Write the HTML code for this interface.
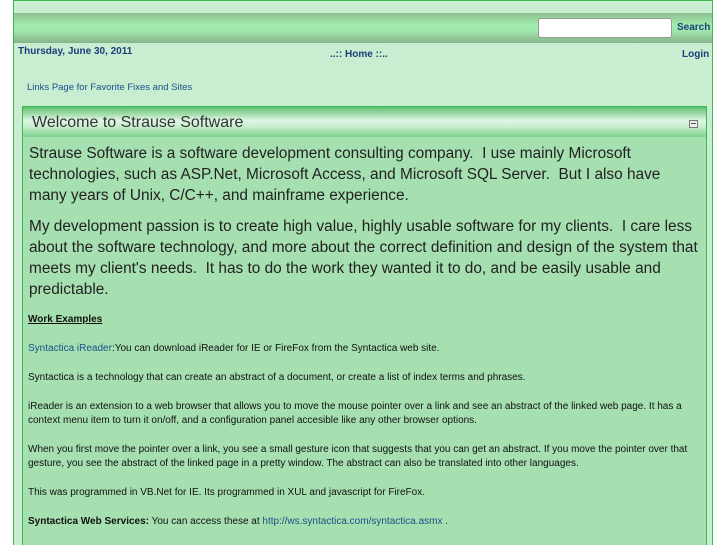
<!DOCTYPE html>
<html style="overflow:hidden;height:545px"><head><style>
body{margin:0;background:#fff;font-family:"Liberation Sans",sans-serif;width:727px;height:545px;overflow:hidden;position:relative}
#wrap{position:absolute;left:13px;top:0;width:698px;height:560px;border:1px solid #3cb850;background:#c8edd0;overflow:hidden}
#bar{position:absolute;left:0;top:12px;width:698px;height:30px;background:linear-gradient(#8fbf93,#a2eeae 40%,#9fe6aa 60%,#86b38a)}
#search{position:absolute;left:524px;top:5px;width:132px;height:18px;background:#fff;border:1px solid #999;border-radius:3px}
.nav{position:absolute;font-size:10px;font-weight:bold;color:#1a3f7a}
#panel{position:absolute;left:8px;top:105px;width:683px;height:460px;border:1px solid #3cb850;background:#a6dfb0}
#ph{height:30px;background:linear-gradient(#5fc071,#e0f6e4 45%,#c9efcf 65%,#7fd08e);font-size:16px;color:#333;line-height:32px;padding-left:9px;position:relative}
#min{position:absolute;right:8px;top:13px;width:7px;height:6px;border:1px solid #777;background:#eee;font-size:0}
#min:after{content:"";position:absolute;left:1px;top:2px;width:5px;height:1px;background:#555}
.big{font-size:15.4px;line-height:21px;color:#222;margin:0 0 10px 6px;width:671px}
.sm{font-size:10px;line-height:14px;color:#111;margin:0 0 15px 5px;width:660px}
a{color:#1c4f8c;text-decoration:none}
</style></head><body>
<div id="wrap">
<div id="bar"><div id="search"></div><div class="nav" style="left:663px;top:9px">Search</div></div>
<div class="nav" style="left:4px;top:45px">Thursday, June 30, 2011</div>
<div class="nav" style="left:316px;top:48px">..:: Home ::..</div>
<div class="nav" style="left:668px;top:48px">Login</div>
<div style="position:absolute;left:13px;top:81px;font-size:9.5px;color:#1c4f8c">Links Page for Favorite Fixes and Sites</div>
<div id="panel"><div id="ph">Welcome to Strause Software<div id="min"></div></div>
<div style="padding-top:6px">
<p class="big">Strause Software is a software development consulting company.&nbsp; I use mainly Microsoft technologies, such as ASP.Net, Microsoft Access, and Microsoft SQL Server.&nbsp; But I also have many years of Unix, C/C++, and mainframe experience.</p>
<p class="big" style="margin-bottom:13px">My development passion is to create high value, highly usable software for my clients.&nbsp; I care less about the software technology, and more about the correct definition and design of the system that meets my client's needs.&nbsp; It has to do the work they wanted it to do, and be easily usable and predictable.</p>
<p class="sm"><b><u>Work Examples</u></b></p>
<p class="sm"><a>Syntactica iReader</a>:You can download iReader for IE or FireFox from the Syntactica web site.</p>
<p class="sm">Syntactica is a technology that can create an abstract of a document, or create a list of index terms and phrases.</p>
<p class="sm">iReader is an extension to a web browser that allows you to move the mouse pointer over a link and see an abstract of the linked web page. It has a context menu item to turn it on/off, and a configuration panel accesible like any other browser options.</p>
<p class="sm">When you first move the pointer over a link, you see a small gesture icon that suggests that you can get an abstract. If you move the pointer over that gesture, you see the abstract of the linked page in a pretty window. The abstract can also be translated into other languages.</p>
<p class="sm">This was programmed in VB.Net for IE. Its programmed in XUL and javascript for FireFox.</p>
<p class="sm"><b>Syntactica Web Services:</b> You can access these at <a>http://ws.syntactica.com/syntactica.asmx</a> .</p>
</div></div>
</div>
</body></html>
